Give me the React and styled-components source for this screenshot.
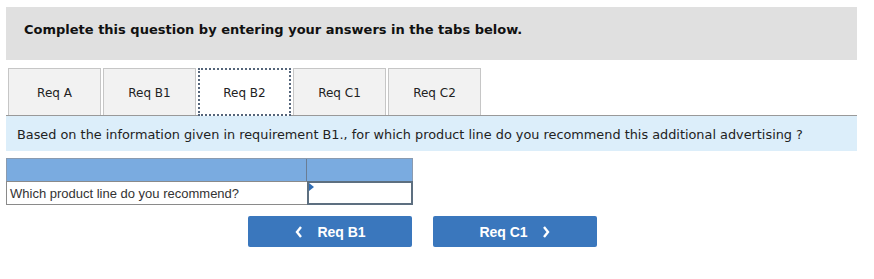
import React from 'react';
import styled, { createGlobalStyle } from 'styled-components';

const GlobalStyle = createGlobalStyle`
  body {
    margin: 0;
    background: #ffffff;
    font-family: "DejaVu Sans", Verdana, sans-serif;
  }
`

const tabs = ['Req A', 'Req B1', 'Req B2', 'Req C1', 'Req C2'];

export default function App() {
  return (
    <>
      <GlobalStyle />
      <Page>
        <Header>Complete this question by entering your answers in the tabs below.</Header>
        <TabBar>
          {tabs.map((tab) => (
            <Tab key={tab} active={tab === 'Req B2'}>{tab}</Tab>
          ))}
        </TabBar>
        <Question>
          Based on the information given in requirement B1., for which product line do you recommend this additional advertising ?
        </Question>
        <AnswerTable>
          <HeadRow>
            <HeadCell width={301} />
            <HeadCell width={106} />
          </HeadRow>
          <BodyRow>
            <LabelCell>Which product line do you recommend?</LabelCell>
            <InputCell>
              <Marker />
            </InputCell>
          </BodyRow>
        </AnswerTable>
        <NavRow>
          <NavButton>
            <Chevron viewBox="0 0 10 14"><path d="M7 2 L3 7 L7 12" /></Chevron>
            <span>Req B1</span>
          </NavButton>
          <NavButton>
            <span>Req C1</span>
            <Chevron viewBox="0 0 10 14"><path d="M3 2 L7 7 L3 12" /></Chevron>
          </NavButton>
        </NavRow>
      </Page>
    </>
  );
}

const Page = styled.div`
  width: 851px;
  padding: 7px 0 0 6px;
`

const Header = styled.div`
  height: 53px;
  background: #e0e0e0;
  box-sizing: border-box;
  padding: 15px 0 0 18px;
  font-size: 13px;
  font-weight: bold;
  color: #111;
`

const TabBar = styled.div`
  display: flex;
  gap: 2px;
  margin-top: 8px;
  padding-left: 2px;
  border-bottom: 1px solid #999;
  height: 48px;
  box-sizing: border-box;
`

const Tab = styled.div`
  width: 93px;
  box-sizing: border-box;
  display: flex;
  align-items: center;
  justify-content: center;
  padding-top: 2px;
  font-size: 12px;
  color: #222;
  background: ${(p) => (p.active ? '#ffffff' : '#f2f2f2')};
  border: ${(p) => (p.active ? '2px dotted #55657a' : '1px solid #c6c6c6')};
  border-bottom: ${(p) => (p.active ? '2px dotted #55657a' : 'none')};
  margin-bottom: ${(p) => (p.active ? '-1px' : '0')};
  height: ${(p) => (p.active ? '48px' : '47px')};
`

const Question = styled.div`
  height: 35px;
  background: #dceefa;
  box-sizing: border-box;
  padding: 11px 0 0 11px;
  font-size: 12.85px;
  color: #222;
`

const AnswerTable = styled.div`
  margin-top: 7px;
  width: 407px;
  font-family: "Liberation Sans", Arial, sans-serif;
`

const HeadRow = styled.div`
  display: flex;
  height: 23px;
  background: #7aabe0;
  border: 1px solid #8a9bb0;
  border-bottom: none;
  box-sizing: border-box;
`

const HeadCell = styled.div`
  width: ${(p) => p.width}px;
  & + & {
    border-left: 1px solid #6a7d94;
  }
`

const BodyRow = styled.div`
  display: flex;
  height: 24px;
`

const LabelCell = styled.div`
  width: 301px;
  box-sizing: border-box;
  border: 1px solid #8a8a8a;
  border-right: none;
  padding: 4px 0 0 3px;
  font-size: 13px;
  color: #333;
`

const InputCell = styled.div`
  position: relative;
  width: 106px;
  box-sizing: border-box;
  border: 2px solid #5d6f80;
  background: #fff;
`

const Marker = styled.div`
  position: absolute;
  left: 0;
  top: 0;
  width: 0;
  height: 0;
  border-top: 4px solid transparent;
  border-bottom: 4px solid transparent;
  border-left: 5px solid #2f6db5;
`

const NavRow = styled.div`
  display: flex;
  gap: 21px;
  margin: 11px 0 0 242px;
`

const NavButton = styled.div`
  width: 164px;
  height: 31px;
  border-radius: 2px;
  background: #3a77bd;
  color: #fff;
  display: flex;
  align-items: center;
  justify-content: center;
  gap: 13px;
  font-family: "Liberation Sans", Arial, sans-serif;
  font-weight: bold;
  font-size: 14px;
`

const Chevron = styled.svg`
  width: 10px;
  height: 14px;
  fill: none;
  stroke: #fff;
  stroke-width: 2.4;
`
